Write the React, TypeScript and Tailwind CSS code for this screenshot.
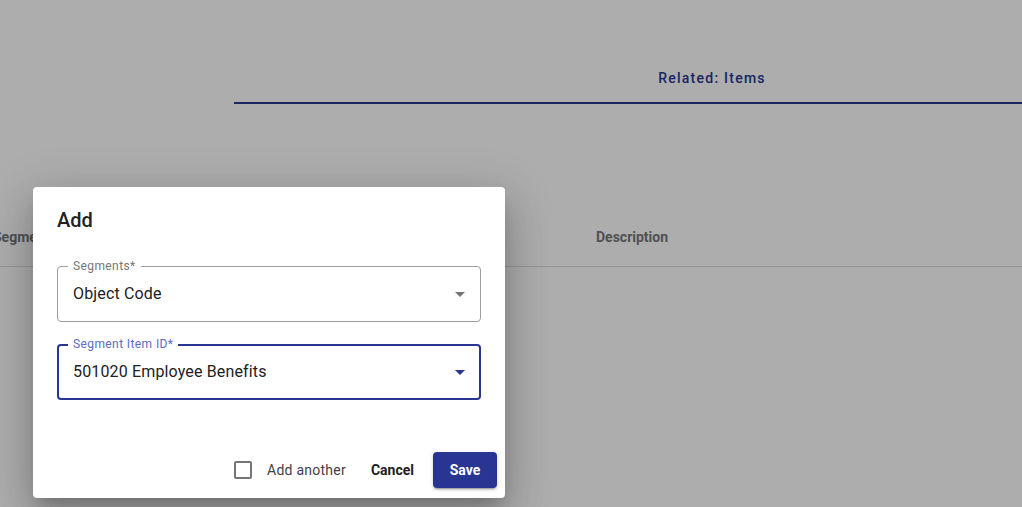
import { useState } from "react";

const font = { fontFamily: "Roboto, 'Noto Sans', sans-serif" };

function Caret({ className }: { className?: string }) {
  return (
    <svg viewBox="0 0 24 24" className={className} fill="currentColor">
      <path d="M7 10l5 5 5-5z" />
    </svg>
  );
}

function SelectField({
  label,
  value,
  focused,
}: {
  label: string;
  value: string;
  focused?: boolean;
}) {
  return (
    <div className="relative">
      <div
        className={
          focused
            ? "flex h-[56px] items-center rounded border-2 border-[#283593] pl-[14px] pr-[7px]"
            : "flex h-[56px] items-center rounded border border-[#9e9e9e] pl-[15px] pr-[8px]"
        }
      >
        <span className="flex-1 text-[16px] tracking-[0.15px] text-[#212121]">{value}</span>
        <Caret className={focused ? "h-6 w-6 text-[#283593]" : "h-6 w-6 text-[#757575]"} />
      </div>
      <span
        className={
          focused
            ? "absolute -top-[8px] left-[11px] bg-white px-[5px] text-[12px] leading-[16px] tracking-[0.4px] text-[#5c6bc0]"
            : "absolute -top-[8px] left-[11px] bg-white px-[5px] text-[12px] leading-[16px] tracking-[0.4px] text-[#757575]"
        }
      >
        {label}
      </span>
    </div>
  );
}

export default function App() {
  const [another, setAnother] = useState(false);

  return (
    <div className="relative h-[507px] w-[1022px] overflow-hidden bg-white" style={font}>
      {/* page behind the modal */}
      <div className="flex flex-col">
        <div className="ml-[234px] mt-[54px] w-[954px]">
          <div className="flex h-[48px] items-center justify-center pl-[2px] text-[14px] font-medium tracking-[1.25px] text-[#283593]">
            Related: Items
          </div>
          <div className="h-[2px] bg-[#283593]" />
        </div>
        <div className="mt-[104px] flex h-[59px] items-center border-b border-[#dcdcdc] text-[14px] font-bold text-[#777]">
          <span className="-ml-[7px] w-[567px]">Segment</span>
          <span className="ml-[36px]">Description</span>
        </div>
      </div>

      {/* backdrop */}
      <div className="absolute inset-0 bg-black/[0.32]" />

      {/* dialog */}
      <div className="absolute left-[33px] top-[187px] flex h-[311px] w-[472px] flex-col rounded bg-white shadow-[0_11px_15px_-7px_rgba(0,0,0,0.2),0_24px_38px_3px_rgba(0,0,0,0.14),0_9px_46px_8px_rgba(0,0,0,0.12)]">
        <h2 className="px-[24px] pt-[20px] text-[20px] font-medium leading-[26px] text-[#212121]">Add</h2>
        <div className="mt-[33px] flex flex-col gap-[22px] px-[24px]">
          <SelectField label="Segments*" value="Object Code" />
          <SelectField label="Segment Item ID*" value="501020 Employee Benefits" focused />
        </div>
        <div className="mt-auto flex items-center justify-end pb-[10px] pr-[8px]">
          <label className="flex cursor-pointer items-center">
            <input
              type="checkbox"
              checked={another}
              onChange={(e) => setAnother(e.target.checked)}
              className="peer sr-only"
            />
            <span className="h-[18px] w-[18px] rounded-[2px] border-2 border-[#757575] peer-checked:border-[#283593] peer-checked:bg-[#283593]" />
            <span className="ml-[15px] text-[14px] tracking-[0.25px] text-[#424242]">Add another</span>
          </label>
          <button className="ml-[17px] h-[36px] px-[8px] text-[14px] font-bold text-[#212121]">Cancel</button>
          <button className="ml-[11px] h-[36px] w-[64px] rounded bg-[#283593] text-[14px] font-bold text-white shadow-[0_3px_1px_-2px_rgba(0,0,0,0.2),0_2px_2px_0_rgba(0,0,0,0.14),0_1px_5px_0_rgba(0,0,0,0.12)]">
            Save
          </button>
        </div>
      </div>
    </div>
  );
}
